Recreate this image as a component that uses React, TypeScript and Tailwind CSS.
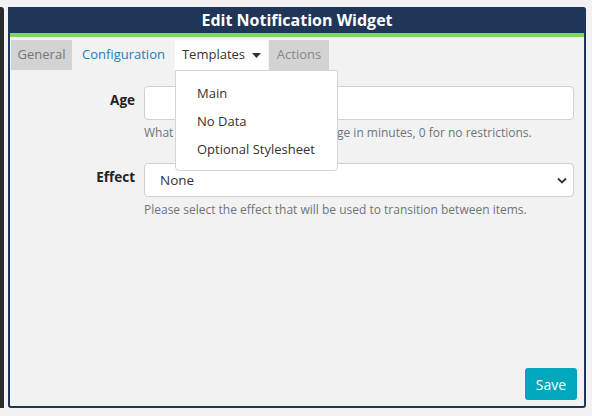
const font = { fontFamily: '"Open Sans", "Liberation Sans", sans-serif' };

function Caret() {
  return (
    <svg width="9" height="5" viewBox="0 0 9 5" className="ml-[7px]">
      <path d="M0 0h9L4.5 5z" fill="#333" />
    </svg>
  );
}

function Chevron() {
  return (
    <svg width="10" height="7" viewBox="0 0 10 7">
      <path d="M1 1.5l4 4 4-4" fill="none" stroke="#333" strokeWidth="1.8" />
    </svg>
  );
}

export default function App() {
  return (
    <div className="w-[592px] h-[416px] bg-[#f2f2f2] flex overflow-hidden" style={font}>
      <div className="w-[4px] h-[401px] mt-[7px] bg-[#2b2b2b] rounded-tr-[3px]" />

      <div className="ml-[4px] mt-[7px] w-[578px] h-[401px] border-2 border-t-0 border-[#1f3658] rounded-t-[4px] rounded-b-[3px] flex flex-col">
        <div className="h-[26px] bg-[#1f3658] rounded-tr-[3px] flex items-center justify-center text-white font-bold text-[16px] -mx-[2px]">
          Edit Notification Widget
        </div>
        <div className="h-[4px] bg-[#7ed957]" />

        <div className="flex-1 flex flex-col pt-[2px] px-[1px]">
          <div className="flex h-[31px] text-[13px] pt-[1px]">
            <div className="w-[61px] flex items-center justify-center bg-[#d3d3d3] text-[#777]">General</div>
            <div className="w-[103px] flex items-center justify-center text-[#1d7cc0]">Configuration</div>
            <div className="relative w-[93px] flex items-center justify-center bg-white text-[#333]">
              Templates
              <Caret />
              <ul className="absolute top-full left-0 w-[163px] z-10 bg-white border border-[#d5d5d5] rounded-b-[4px] pt-[9px] pb-[6px] text-[13px] text-[#333]">
                <li className="h-[28px] flex items-center pl-[21px]">Main</li>
                <li className="h-[28px] flex items-center pl-[21px]">No Data</li>
                <li className="h-[28px] flex items-center pl-[21px]">Optional Stylesheet</li>
              </ul>
            </div>
            <div className="ml-[1px] w-[60px] flex items-center justify-center bg-[#d3d3d3] text-[#888]">Actions</div>
          </div>

          <div className="flex flex-col pt-[16px] pr-[9px] gap-[21px]">
            <div className="flex">
              <label className="w-[133px] shrink-0 pr-[9px] text-right font-bold text-[13.5px] text-[#222] pt-[4px]">Age</label>
              <div className="flex-1 flex flex-col">
                <input className="h-[34px] bg-white border border-[#d0d0d0] rounded-[4px]" />
                <p className="mt-[4px] text-[12px] text-[#6c757d]">
                  What is the maximum message's age in minutes, 0 for no restrictions.
                </p>
              </div>
            </div>

            <div className="flex">
              <label className="w-[133px] shrink-0 pr-[9px] text-right font-bold text-[13.5px] text-[#222] pt-[4px]">Effect</label>
              <div className="flex-1 flex flex-col">
                <div className="h-[34px] bg-white border border-[#d0d0d0] rounded-[4px] flex items-center justify-between pl-[15px] pr-[6px] text-[13.5px] text-[#333]">
                  None
                  <Chevron />
                </div>
                <p className="mt-[4px] text-[12px] text-[#6c757d]">
                  Please select the effect that will be used to transition between items.
                </p>
              </div>
            </div>
          </div>

          <div className="mt-auto flex justify-end pr-[6px] pb-[6px]">
            <button className="w-[52px] h-[32px] rounded-[3px] bg-[#00a7bd] text-white text-[14px]">Save</button>
          </div>
        </div>
      </div>
    </div>
  );
}
